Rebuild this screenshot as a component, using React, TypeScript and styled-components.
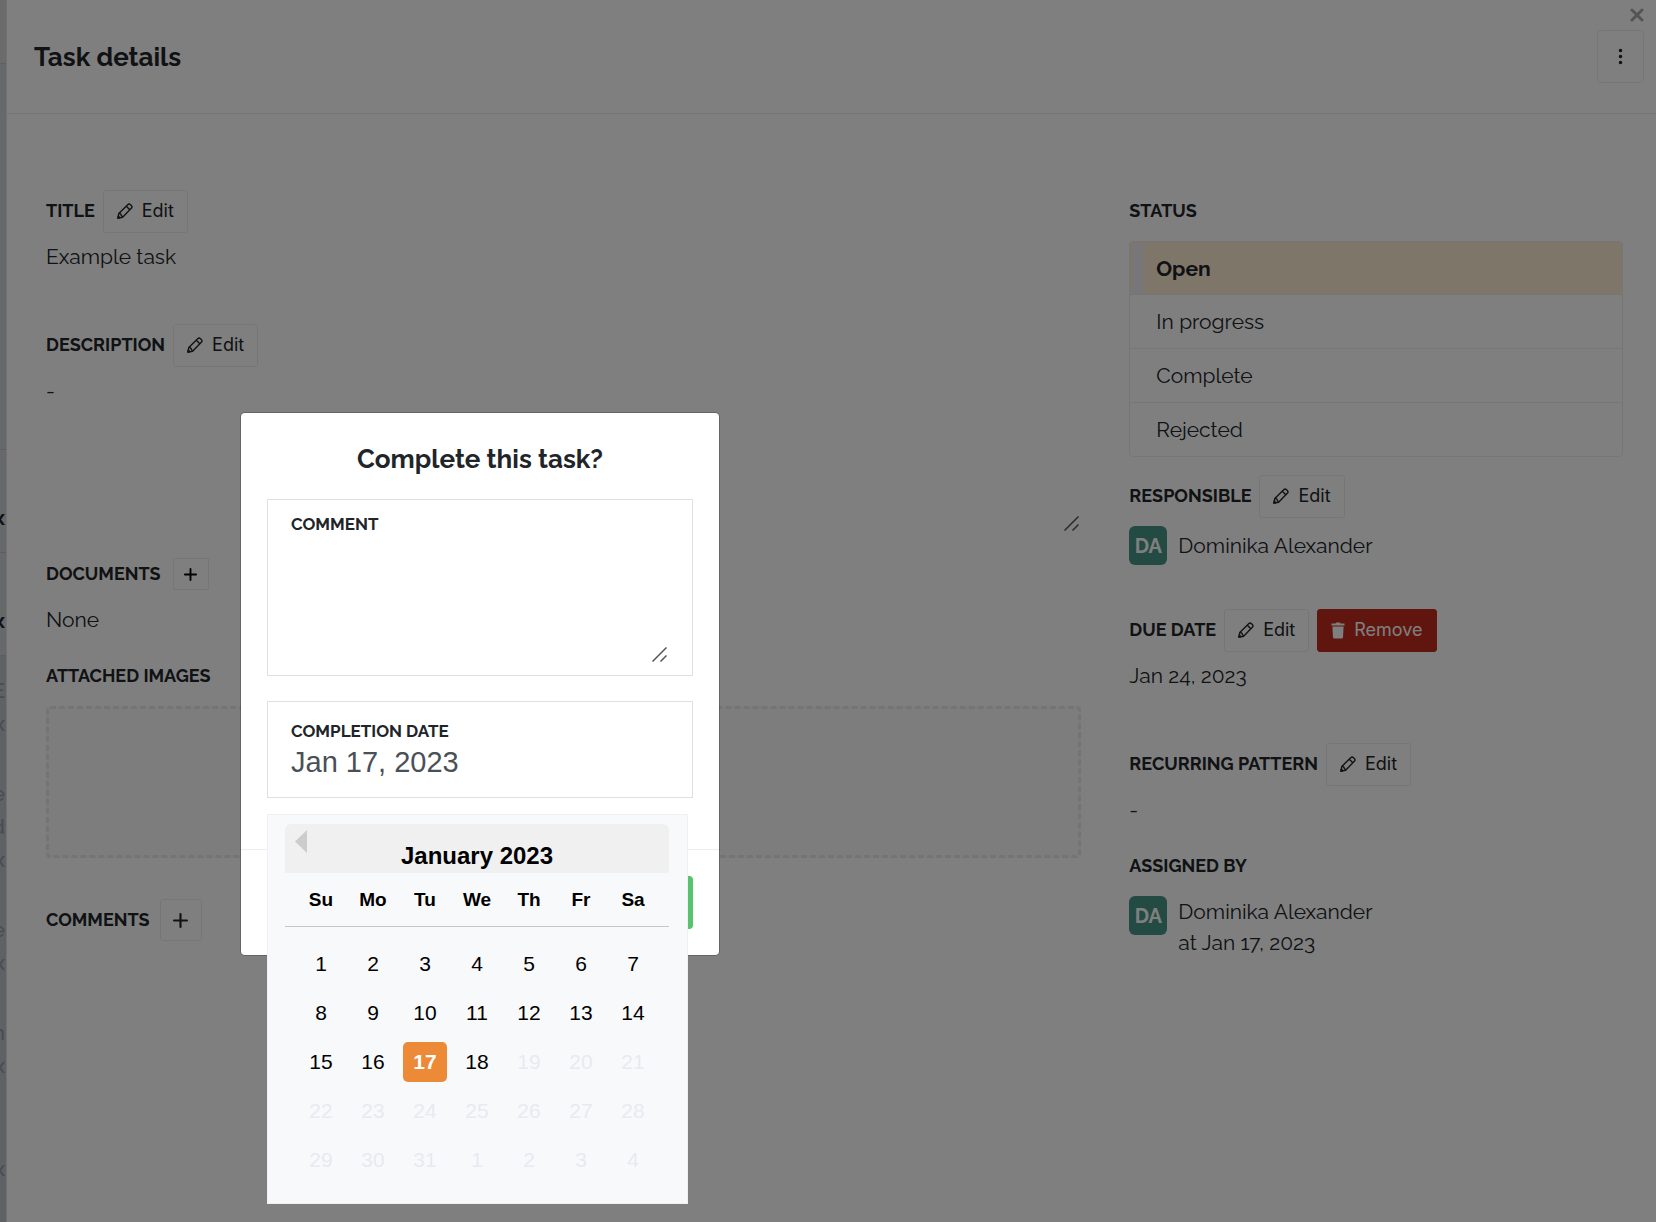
import React from 'react';
import styled, { createGlobalStyle } from 'styled-components';
import { BsThreeDotsVertical } from 'react-icons/bs';

const textFont = 'Raleway, Lato, sans-serif';
const uiFont = 'Inter, sans-serif';
const plainFont = '"Liberation Sans", Arial, sans-serif';
const ink = '#212529';
const line = '#ededed';

const GlobalStyle = createGlobalStyle`
  *, *::before, *::after { box-sizing: border-box; }
  body {
    margin: 0;
    background: #fff;
    color: ${ink};
    font-family: ${textFont};
    font-size: 21px;
    line-height: 31px;
  }
  h1, h2, h3, p, ul, dl, dd { margin: 0; padding: 0; }
  button, input, textarea { font: inherit; color: inherit; margin: 0; }
`;

const Page = styled.div`
  display: flex;
  min-height: 100vh;
  overflow: hidden;
`;

/* Sliver of the task list left uncovered by the drawer */
const ListEdge = styled.aside`
  display: flex;
  flex-direction: column;
  flex: 0 0 6px;
  width: 6px;
  overflow: hidden;
  background: #cfd0d3;
`;

const ListTop = styled.div`
  height: 64px;
  background: #d6d7d9;
  border-bottom: 1px solid #c2c3c6;
`;

const ListFill = styled.div`
  height: 386px;
  border-bottom: 1px solid #bcbdc0;
`;

const ListRow = styled.div<{ $lines: number; $selected?: boolean }>`
  display: flex;
  flex-direction: column;
  align-items: flex-end;
  justify-content: center;
  height: ${p => (p.$lines === 3 ? 136 : 103)}px;
  padding: ${p => (p.$lines === 1 ? 32 : 0)}px 1px 0 0;
  border-bottom: 1px solid ${p => (p.$selected ? '#bdc0c7' : '#bcbdc0')};
  background: ${p => (p.$selected ? '#bfc2c9' : 'transparent')};
  color: ${p => (p.$selected ? '#8c9aa8' : ink)};
  font-weight: ${p => (p.$selected ? 500 : 700)};
  line-height: 33px;
`;

const ListRest = styled.div`
  flex: 1;
  background: #bfc2c9;
`;

const Drawer = styled.main`
  flex: 1;
  min-width: 0;
  background: #fff;
  border-left: 1px solid #e2e2e2;
`;

const DrawerHeader = styled.header`
  display: flex;
  align-items: center;
  justify-content: space-between;
  height: 114px;
  padding: 0 12px 0 27px;
  border-bottom: 1px solid ${line};
`;

const DrawerTitle = styled.h1`
  font-size: 26px;
  line-height: 36px;
`;

const HeaderActions = styled.div`
  display: flex;
  flex-direction: column;
  align-items: flex-end;
  gap: 8px;
  align-self: flex-start;
  padding-top: 8px;
`;

const CloseButton = styled.button`
  display: flex;
  padding: 0;
  border: 0;
  background: none;
  color: #a9a9a9;
`;

const MenuButton = styled.button`
  display: flex;
  align-items: center;
  justify-content: center;
  width: 47px;
  height: 53px;
  padding: 0;
  border: 1px solid ${line};
  border-radius: 4px;
  background: none;
`;

const Columns = styled.div`
  display: grid;
  grid-template-columns: 2fr 1fr;
  padding: 76px 9px 0 15px;
`;

const Column = styled.div`
  min-width: 0;
  padding: 0 24px;
`;

const Field = styled.section<{ $space?: number }>`
  display: flex;
  flex-direction: column;
  gap: 9px;
  margin-bottom: ${p => p.$space ?? 20}px;
`;

const FieldHeader = styled.div<{ $gap?: number }>`
  display: flex;
  align-items: center;
  gap: ${p => p.$gap ?? 8}px;
  height: 42px;
`;

const FieldLabel = styled.h2`
  font-size: 18px;
  line-height: 24px;
  font-weight: 700;
  text-transform: uppercase;
  white-space: nowrap;
`;

const SmallButton = styled.button<{ $danger?: boolean }>`
  display: flex;
  align-items: center;
  gap: 9px;
  height: 43px;
  padding: 0 13px;
  border: 1px solid ${p => (p.$danger ? '#c22a1e' : line)};
  border-radius: 3px;
  background: ${p => (p.$danger ? '#c22a1e' : 'none')};
  color: ${p => (p.$danger ? '#fff' : ink)};
  font-family: ${uiFont};
  font-size: 18px;
  line-height: 24px;
`;

const AddButton = styled.button<{ $compact?: boolean }>`
  display: flex;
  align-items: center;
  justify-content: center;
  width: ${p => (p.$compact ? 36 : 42)}px;
  height: ${p => (p.$compact ? 32 : 42)}px;
  padding: 0;
  border: 1px solid ${line};
  border-radius: ${p => (p.$compact ? 0 : 3)}px;
  background: none;
  color: ${p => (p.$compact ? '#000' : ink)};
`;

const ResizeWrap = styled.div`
  position: relative;
  display: flex;
  flex: 1;
`;

const Grip = styled.svg`
  position: absolute;
  right: 2px;
  bottom: 2px;
  pointer-events: none;
`;

const DescriptionText = styled.textarea`
  flex: 1;
  height: 158px;
  padding: 0;
  border: 0;
  background: none;
  resize: none;
  outline: none;
`;

const DropZone = styled.div`
  height: 152px;
  border: 3px dashed #e9e9e9;
  border-radius: 4px;
  background: #fbfbfb;
`;

const StatusList = styled.ul`
  list-style: none;
  border: 1px solid ${line};
  border-radius: 4px;
  overflow: hidden;
`;

const StatusItem = styled.li<{ $active?: boolean }>`
  display: flex;
  height: ${p => (p.$active ? 52 : 54)}px;
  border-top: ${p => (p.$active ? '0' : `1px solid ${line}`)};
  padding-left: 2px;
  background: ${p => (p.$active ? '#feecd4' : 'none')};
  font-weight: ${p => (p.$active ? 700 : 400)};
`;

const StatusMark = styled.span<{ $active?: boolean }>`
  width: 11px;
  margin-top: 1px;
  background: ${p => (p.$active ? '#eeeff4' : 'none')};
`;

const StatusButton = styled.button`
  flex: 1;
  padding: 0 13px;
  border: 0;
  background: none;
  text-align: left;
`;

const Person = styled.div<{ $top?: boolean }>`
  display: flex;
  align-items: ${p => (p.$top ? 'flex-start' : 'center')};
  gap: 11px;
`;

const Avatar = styled.span`
  display: flex;
  align-items: center;
  justify-content: center;
  width: 38px;
  height: 39px;
  border-radius: 6px;
  background: #469686;
  color: #fff;
  font-size: 20px;
  line-height: 24px;
  font-weight: 700;
`;

const Overlay = styled.div`
  position: absolute;
  inset: 0;
  display: flex;
  align-items: flex-start;
  padding: 413px 0 0 241px;
  background: rgba(0, 0, 0, 0.5);
`;

const Dialog = styled.form`
  width: 478px;
  border-radius: 4px;
  background: #fff;
  box-shadow: 0 0 0 1px rgba(0, 0, 0, 0.2);
`;

const DialogBody = styled.div`
  padding: 26px 26px 51px;
`;

const DialogTitle = styled.h2`
  margin-bottom: 20px;
  font-size: 26px;
  line-height: 40px;
  text-align: center;
`;

const InputBox = styled.div<{ $tall?: boolean }>`
  position: relative;
  display: flex;
  flex-direction: column;
  gap: 2px;
  height: ${p => (p.$tall ? 177 : 97)}px;
  margin-bottom: ${p => (p.$tall ? 25 : 0)}px;
  padding: ${p => (p.$tall ? '14px 23px 11px' : '19px 23px 18px')};
  border: 1px solid #dee0e4;
`;

const InputLabel = styled.label`
  font-size: 17px;
  line-height: 20px;
  font-weight: 700;
  text-transform: uppercase;
`;

const CommentText = styled.textarea`
  flex: 1;
  padding: 0;
  border: 0;
  background: none;
  resize: none;
  outline: none;
`;

const DateInput = styled.input`
  width: 100%;
  height: 38px;
  padding: 0;
  border: 0;
  outline: none;
  background: none;
  color: #495057;
  font-family: ${plainFont};
  font-size: 29px;
  line-height: 38px;
`;

const DialogFooter = styled.footer`
  display: flex;
  justify-content: flex-end;
  padding: 26px;
  border-top: 1px solid ${line};
`;

const ConfirmButton = styled.button`
  width: 120px;
  height: 53px;
  border: 0;
  border-radius: 4px;
  background: #57c36e;
`;

const Calendar = styled.div`
  position: absolute;
  top: calc(100% + 17px);
  left: -1px;
  width: 421px;
  padding: 9px 18px 19px 17px;
  border: 1px solid #eff0f1;
  background: #f8f9fb;
  color: #000;
  font-family: ${plainFont};
`;

const MonthBar = styled.div`
  display: grid;
  grid-template-columns: 44px 1fr 44px;
  align-items: start;
  height: 49px;
  border-radius: 6px 6px 0 0;
  background: #f0f0f0;
`;

const PreviousButton = styled.button`
  display: flex;
  padding: 6px 10px;
  border: 0;
  background: none;
`;

const MonthName = styled.h3`
  padding-top: 17px;
  font-size: 24px;
  line-height: 30px;
  text-align: center;
`;

const MonthTable = styled.table`
  display: block;
  font-size: 21px;
  line-height: 24px;

  thead, tbody { display: block; }
  tbody { padding-top: 12px; }
`;

const Week = styled.tr<{ $head?: boolean }>`
  display: grid;
  grid-template-columns: repeat(7, 1fr);
  align-items: center;
  height: ${p => (p.$head ? 54 : 49)}px;
  padding: 0 10px;
  border-bottom: ${p => (p.$head ? '1px solid #c6c7c9' : '0')};
`;

const Weekday = styled.th`
  padding: 0;
  font-size: 19px;
  text-align: center;
`;

const DayCell = styled.td`
  display: flex;
  justify-content: center;
  padding: 0;
`;

const Day = styled.button<{ $selected?: boolean }>`
  width: 44px;
  height: 40px;
  padding: 0;
  border: 0;
  border-radius: 5px;
  background: ${p => (p.$selected ? '#ec8a37' : 'none')};
  color: ${p => (p.$selected ? '#fff' : '#000')};
  font-weight: ${p => (p.$selected ? 700 : 400)};
  &:disabled { color: #e8eaf0; }
`;

const PlusIcon = ({ size }: { size: number }) => (
  <svg width={size} height={size} viewBox="0 0 14 14" fill="none" stroke="currentColor" strokeWidth="2" strokeLinecap="round">
    <path d="M7 1v12M1 7h12" />
  </svg>
);

const PencilIcon = () => (
  <svg width="16" height="16" viewBox="0 0 16 16" fill="none" stroke="currentColor" strokeWidth="1.4" strokeLinejoin="round">
    <path d="M0.900 15.100l0.900-4.700L10.700 1.700a2 2 0 0 1 2.800 0l0.800 0.800a2 2 0 0 1 0 2.800L5.600 14.200z" />
    <path d="M9.300 3.200l3.500 3.500M1.800 10.400l1.900 0.500l0.500 1.300l1.400 2" />
    <path d="M0.900 15.100l0.400-2l1.600 1.600z" fill="currentColor" />
  </svg>
);

const TrashIcon = () => (
  <svg width="14" height="17" viewBox="0 0 14 17" fill="currentColor">
    <path d="M0.5 1.5h4L5.2 0.6h3.6l0.7 0.9h4v2.1h-13zM1.4 4.400h11.2l-0.6 10.800a1.4 1.4 0 0 1-1.400 1.300H3.400A1.400 1.400 0 0 1 2 15.200z" />
  </svg>
);

const CloseIcon = () => (
  <svg width="14" height="14" viewBox="0 0 14 14" fill="none" stroke="currentColor" strokeWidth="3" strokeLinecap="round">
    <path d="M2 2l10 10M12 2L2 12" />
  </svg>
);

const ResizeGrip = () => (
  <Grip width="15" height="15" viewBox="0 0 15 15" fill="none" stroke="#555" strokeWidth="1.500">
    <path d="M0.500 14.500l14-14M8.500 14.500l6-6" />
  </Grip>
);

const EditButton = () => (
  <SmallButton type="button"><PencilIcon />Edit</SmallButton>
);

const listRows = [
  { text: ['x'], selected: false },
  { text: ['x'], selected: false },
  { text: ['E', 'x'], selected: true },
  { text: ['e', 'd', 'x'], selected: true },
  { text: ['e', 'x'], selected: true },
  { text: ['n', 'x'], selected: true },
  { text: ['x'], selected: true },
];

const weekdays = ['Su', 'Mo', 'Tu', 'We', 'Th', 'Fr', 'Sa'];
const statuses = ['Open', 'In progress', 'Complete', 'Rejected'];
const weeks = Array.from({ length: 5 }, (_, w) => Array.from({ length: 7 }, (_, d) => w * 7 + d + 1));

export default function App() {
  return (
    <>
      <GlobalStyle />
      <Page>
        <ListEdge aria-hidden="true">
          <ListTop />
          <ListFill />
          {listRows.map((row, i) => (
            <ListRow key={i} $lines={row.text.length} $selected={row.selected}>
              {row.text.map((part, j) => <span key={j}>{part}</span>)}
            </ListRow>
          ))}
          <ListRest />
        </ListEdge>

        <Drawer>
          <DrawerHeader>
            <DrawerTitle>Task details</DrawerTitle>
            <HeaderActions>
              <CloseButton type="button" aria-label="Close"><CloseIcon /></CloseButton>
              <MenuButton type="button" aria-label="More actions"><BsThreeDotsVertical size={19} /></MenuButton>
            </HeaderActions>
          </DrawerHeader>

          <Columns>
            <Column>
              <Field $space={52}>
                <FieldHeader><FieldLabel>Title</FieldLabel><EditButton /></FieldHeader>
                <p>Example task</p>
              </Field>
              <Field>
                <FieldHeader><FieldLabel id="description">Description</FieldLabel><EditButton /></FieldHeader>
                <ResizeWrap>
                  <DescriptionText aria-labelledby="description" readOnly defaultValue="-" />
                  <ResizeGrip />
                </ResizeWrap>
              </Field>
              <Field>
                <FieldHeader $gap={12}>
                  <FieldLabel>Documents</FieldLabel>
                  <AddButton type="button" $compact aria-label="Add document"><PlusIcon size={13} /></AddButton>
                </FieldHeader>
                <p>None</p>
              </Field>
              <Field $space={41}>
                <FieldHeader><FieldLabel>Attached images</FieldLabel></FieldHeader>
                <DropZone />
              </Field>
              <Field>
                <FieldHeader $gap={10}>
                  <FieldLabel>Comments</FieldLabel>
                  <AddButton type="button" aria-label="Add comment"><PlusIcon size={15} /></AddButton>
                </FieldHeader>
              </Field>
            </Column>

            <Column>
              <Field $space={18}>
                <FieldHeader><FieldLabel>Status</FieldLabel></FieldHeader>
                <StatusList>
                  {statuses.map((status, i) => (
                    <StatusItem key={status} $active={i === 0}>
                      <StatusMark $active={i === 0} />
                      <StatusButton type="button">{status}</StatusButton>
                    </StatusItem>
                  ))}
                </StatusList>
              </Field>
              <Field $space={44}>
                <FieldHeader><FieldLabel>Responsible</FieldLabel><EditButton /></FieldHeader>
                <Person><Avatar>DA</Avatar><p>Dominika Alexander</p></Person>
              </Field>
              <Field $space={52}>
                <FieldHeader>
                  <FieldLabel>Due date</FieldLabel>
                  <EditButton />
                  <SmallButton type="button" $danger><TrashIcon />Remove</SmallButton>
                </FieldHeader>
                <p>Jan 24, 2023</p>
              </Field>
              <Field>
                <FieldHeader><FieldLabel>Recurring pattern</FieldLabel><EditButton /></FieldHeader>
                <p>-</p>
              </Field>
              <Field>
                <FieldHeader><FieldLabel>Assigned by</FieldLabel></FieldHeader>
                <Person $top>
                  <Avatar>DA</Avatar>
                  <p>Dominika Alexander<br />at Jan 17, 2023</p>
                </Person>
              </Field>
            </Column>
          </Columns>
        </Drawer>
      </Page>

      <Overlay>
        <Dialog role="dialog" aria-labelledby="dialog-title" onSubmit={e => e.preventDefault()}>
          <DialogBody>
            <DialogTitle id="dialog-title">Complete this task?</DialogTitle>
            <InputBox $tall>
              <InputLabel htmlFor="comment">Comment</InputLabel>
              <ResizeWrap>
                <CommentText id="comment" />
                <ResizeGrip />
              </ResizeWrap>
            </InputBox>
            <InputBox>
              <InputLabel htmlFor="completion-date">Completion date</InputLabel>
              <DateInput id="completion-date" type="text" defaultValue="Jan 17, 2023" />
              <Calendar>
                <MonthBar>
                  <PreviousButton type="button" aria-label="Previous month">
                    <svg width="12" height="23" viewBox="0 0 12 23" fill="#ccc"><path d="M12 0v23L0 11.500z" /></svg>
                  </PreviousButton>
                  <MonthName>January 2023</MonthName>
                </MonthBar>
                <MonthTable>
                  <thead>
                    <Week $head>{weekdays.map(day => <Weekday key={day} scope="col">{day}</Weekday>)}</Week>
                  </thead>
                  <tbody>
                    {weeks.map(week => (
                      <Week key={week[0]}>
                        {week.map(day => (
                          <DayCell key={day}>
                            <Day type="button" $selected={day === 17} disabled={day > 18}>
                              {day > 31 ? day - 31 : day}
                            </Day>
                          </DayCell>
                        ))}
                      </Week>
                    ))}
                  </tbody>
                </MonthTable>
              </Calendar>
            </InputBox>
          </DialogBody>
          <DialogFooter>
            <ConfirmButton type="submit" aria-label="Complete" />
          </DialogFooter>
        </Dialog>
      </Overlay>
    </>
  );
}
